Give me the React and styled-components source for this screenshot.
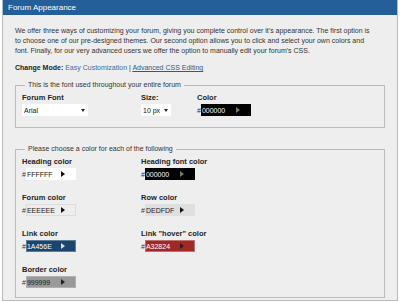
import styled, { createGlobalStyle } from "styled-components";

const Global = createGlobalStyle`
  html, body { margin: 0; padding: 0; background: #fff; }
  body { font-family: "Liberation Sans", Arial, sans-serif; }
`;

const Panel = styled.div`
  margin: 0 2px;
  height: 301px;
  border: 1px solid #b9b9b9;
  border-top: none;
  background: #eeeeee;
  box-sizing: border-box;
`;

const Header = styled.div`
  height: 15px;
  background: #245f99;
  color: #fff;
  font-size: 8px;
  line-height: 15px;
  padding-left: 5px;
`;

const Body = styled.div`
  padding: 11px 12px 0 12px;
  color: #333;
  font-size: 7px;
`;

const Intro = styled.p`
  margin: 0;
  line-height: 10px;
  white-space: nowrap;
`;

const Mode = styled.p`
  margin: 7px 0 0;
  line-height: 10px;
  b { color: #222; }
`;

const ModeLink = styled.a`
  color: ${(p) => (p.$active ? "#3a6c9c" : "#2a5b8c")};
  text-decoration: ${(p) => (p.$active ? "none" : "underline")};
`;

const Group = styled.fieldset`
  margin: ${(p) => p.$mt}px 0 0;
  border: 1px solid #bcbcbc;
  padding: 3px 6px ${(p) => p.$pb}px;
  legend {
    padding: 0 3px;
    margin-left: 3px;
    color: #333;
    line-height: 10px;
  }
`;

const Grid = styled.div`
  display: grid;
  grid-template-columns: ${(p) => p.$cols};
  row-gap: ${(p) => p.$gap || 0}px;
`;

const Field = styled.div`
  display: flex;
  flex-direction: column;
  align-items: flex-start;
`;

const Label = styled.span`
  font-weight: bold;
  color: #222;
  font-size: 7.5px;
  line-height: 10px;
`;

const Select = styled.div`
  width: ${(p) => p.$w}px;
  height: 12px;
  margin-top: 1px;
  background: #fff;
  display: flex;
  align-items: center;
  justify-content: space-between;
  padding: 0 3px 0 2px;
  box-sizing: border-box;
  color: #111;
  &::after {
    content: "";
    border-left: 2px solid transparent;
    border-right: 2px solid transparent;
    border-top: 3px solid #222;
  }
`;

const ColorRow = styled.div`
  display: flex;
  align-items: center;
  margin-top: 1px;
  color: #333;
`;

const Swatch = styled.div`
  width: 50px;
  height: 12px;
  box-sizing: border-box;
  background: ${(p) => p.$bg};
  color: ${(p) => p.$fg};
  border: 1px solid ${(p) => p.$bd || p.$bg};
  display: flex;
  align-items: center;
  padding: 0 4px 0 0;
  span { flex: 1; }
`;

const Arrow = styled.i`
  width: 0;
  height: 0;
  margin-right: 6px;
  border-top: 3px solid transparent;
  border-bottom: 3px solid transparent;
  border-left: 4px solid ${(p) => p.$c};
`;

const colors = [
  { label: "Heading color", hex: "FFFFFF", bg: "#ffffff", fg: "#111", arrow: "#111" },
  { label: "Heading font color", hex: "000000", bg: "#000000", fg: "#fff", arrow: "#777" },
  { label: "Forum color", hex: "EEEEEE", bg: "#eeeeee", fg: "#222", arrow: "#111", bd: "#dcdcdc" },
  { label: "Row color", hex: "DEDFDF", bg: "#dedfdf", fg: "#222", arrow: "#111" },
  { label: "Link color", hex: "1A456E", bg: "#1a456e", fg: "#fff", arrow: "#ddd", bd: "#5d7e9c" },
  { label: 'Link "hover" color', hex: "A32824", bg: "#a32824", fg: "#fff", arrow: "#222", bd: "#c0706d" },
  { label: "Border color", hex: "999999", bg: "#999999", fg: "#222", arrow: "#222", bd: "#b0b0b0" },
];

const ColorField = ({ label, hex, bg, fg, arrow, bd }) => (
  <Field>
    <Label>{label}</Label>
    <ColorRow>
      #
      <Swatch $bg={bg} $fg={fg} $bd={bd}>
        <span>{hex}</span>
        <Arrow $c={arrow} />
      </Swatch>
    </ColorRow>
  </Field>
);

export default function App() {
  return (
    <>
      <Global />
      <Panel>
        <Header>Forum Appearance</Header>
        <Body>
          <Intro>
            We offer three ways of customizing your forum, giving you complete control over it's appearance. The first option is
            <br />
            to choose one of our pre-designed themes. Our second option allows you to click and select your own colors and
            <br />
            font. Finally, for our very advanced users we offer the option to manually edit your forum's CSS.
          </Intro>
          <Mode>
            <b>Change Mode:</b> <ModeLink $active>Easy Customization</ModeLink> | <ModeLink>Advanced CSS Editing</ModeLink>
          </Mode>
          <Group $mt={7} $pb={11}>
            <legend>This is the font used throughout your entire forum</legend>
            <Grid $cols="119px 56px 1fr">
              <Field>
                <Label>Forum Font</Label>
                <Select $w={66}>Arial</Select>
              </Field>
              <Field>
                <Label>Size:</Label>
                <Select $w={30}>10 px</Select>
              </Field>
              <ColorField label="Color" hex="000000" bg="#000" fg="#fff" arrow="#777" />
            </Grid>
          </Group>
          <Group $mt={16} $pb={9}>
            <legend>Please choose a color for each of the following</legend>
            <Grid $cols="119px 1fr" $gap={13}>
              {colors.map((c) => (
                <ColorField key={c.label} {...c} />
              ))}
            </Grid>
          </Group>
        </Body>
      </Panel>
    </>
  );
}
